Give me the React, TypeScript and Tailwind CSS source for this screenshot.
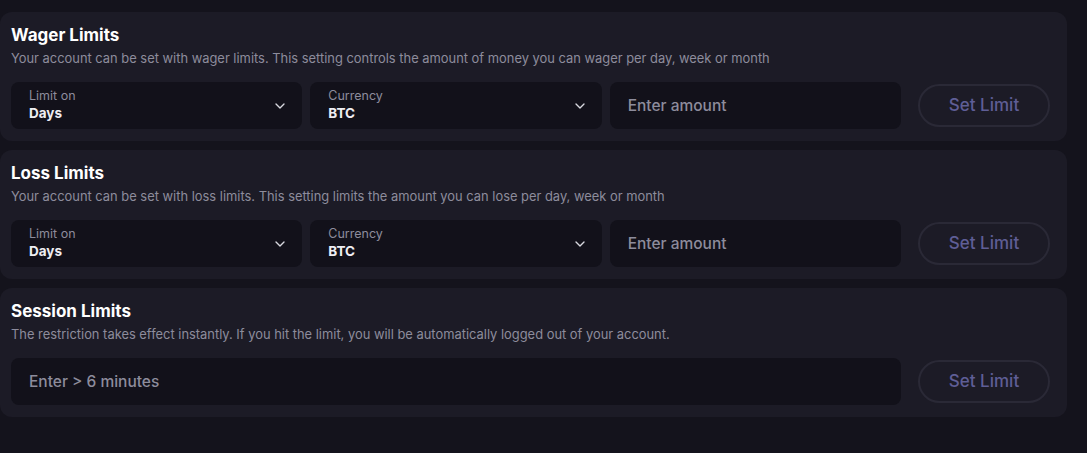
import { ChevronDown } from 'lucide-react';

const FONT = { fontFamily: 'Inter, "Noto Sans", sans-serif' };

function Select({ label, value }: { label: string; value: string }) {
  return (
    <div className="min-w-0 h-[47px] rounded-lg bg-[#12111a] flex items-center justify-between pl-[18px] pr-[14px]">
      <div className="flex flex-col pb-[1px]">
        <span className="text-[12.5px] text-[#8d8c9c] leading-[16px]">{label}</span>
        <span className="text-[13.5px] font-bold text-[#eeeef3] leading-[18px]">{value}</span>
      </div>
      <ChevronDown className="w-4 h-4 text-[#d8d8e0]" strokeWidth={2} />
    </div>
  );
}

function Field({ placeholder }: { placeholder: string }) {
  return (
    <div className="min-w-0 h-[47px] rounded-lg bg-[#12111a] flex items-center pl-[18px]">
      <span className="text-[15.5px] font-medium text-[#8d8c9c]">{placeholder}</span>
    </div>
  );
}

function SetLimit() {
  return (
    <button className="ml-[9px] w-[132px] h-[43px] rounded-full border-2 border-[#2a2936] text-[17px] font-medium text-[#5f5e96] flex items-center justify-center">
      Set Limit
    </button>
  );
}

function Card({
  title,
  text,
  cols,
  children,
}: {
  title: string;
  text: string;
  cols: string;
  children: React.ReactNode;
}) {
  return (
    <section className="w-[1067px] rounded-xl bg-[#1c1b26] pl-[11px] pr-[17px] pt-[12px] pb-[12px]">
      <h2 className="text-[17px] font-bold text-white leading-[22px]">{title}</h2>
      <p className="mt-[4px] text-[12.9px] text-[#8d8c9c] leading-[18px]">{text}</p>
      <div className={`mt-[14px] grid items-center gap-2 ${cols}`}>{children}</div>
    </section>
  );
}

export default function App() {
  return (
    <div className="min-h-screen bg-[#14131c] pt-3 flex flex-col gap-[9px]" style={FONT}>
      <Card
        title="Wager Limits"
        text="Your account can be set with wager limits. This setting controls the amount of money you can wager per day, week or month"
        cols="grid-cols-[minmax(0,1fr)_minmax(0,1fr)_minmax(0,1fr)_141px]"
      >
        <Select label="Limit on" value="Days" />
        <Select label="Currency" value="BTC" />
        <Field placeholder="Enter amount" />
        <SetLimit />
      </Card>
      <Card
        title="Loss Limits"
        text="Your account can be set with loss limits. This setting limits the amount you can lose per day, week or month"
        cols="grid-cols-[minmax(0,1fr)_minmax(0,1fr)_minmax(0,1fr)_141px]"
      >
        <Select label="Limit on" value="Days" />
        <Select label="Currency" value="BTC" />
        <Field placeholder="Enter amount" />
        <SetLimit />
      </Card>
      <Card
        title="Session Limits"
        text="The restriction takes effect instantly. If you hit the limit, you will be automatically logged out of your account."
        cols="grid-cols-[minmax(0,1fr)_141px]"
      >
        <Field placeholder="Enter > 6 minutes" />
        <SetLimit />
      </Card>
    </div>
  );
}
